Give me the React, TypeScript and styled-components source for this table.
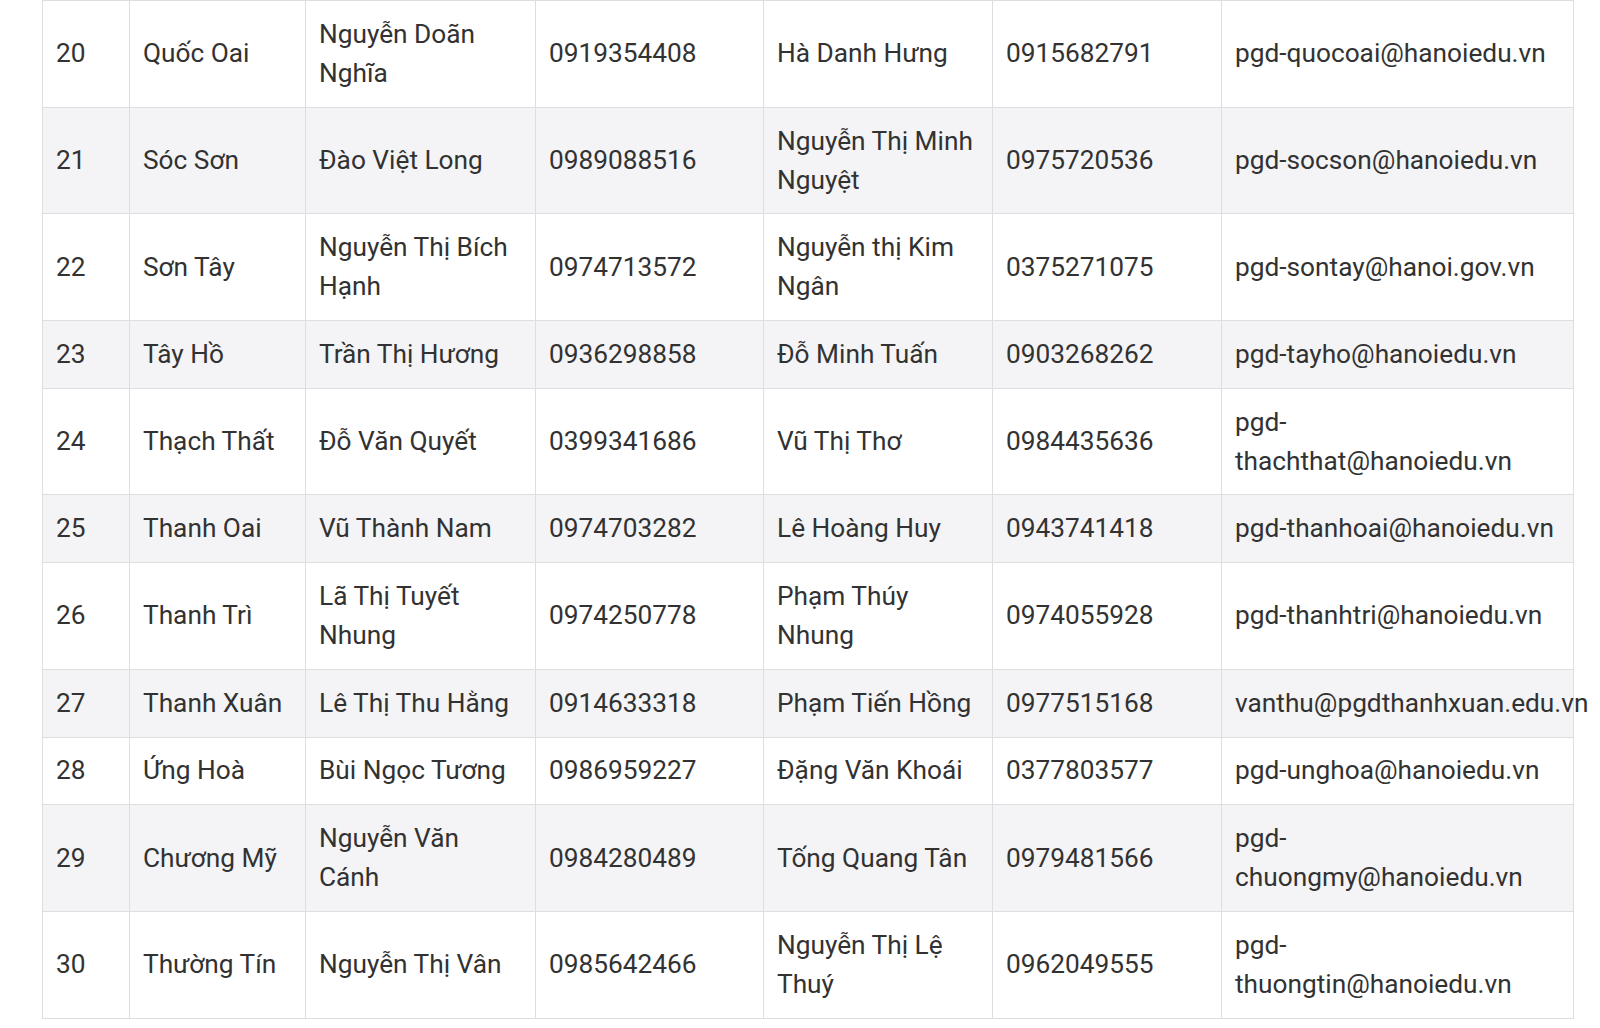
import styled, { createGlobalStyle } from "styled-components";

type Office = {
  no: number;
  district: string;
  head: string;
  headPhone: string;
  contact: string;
  contactPhone: string;
  email: string;
};

const offices: Office[] = [
  { no: 20, district: "Quốc Oai", head: "Nguyễn Doãn Nghĩa", headPhone: "0919354408", contact: "Hà Danh Hưng", contactPhone: "0915682791", email: "pgd-quocoai@hanoiedu.vn" },
  { no: 21, district: "Sóc Sơn", head: "Đào Việt Long", headPhone: "0989088516", contact: "Nguyễn Thị Minh Nguyệt", contactPhone: "0975720536", email: "pgd-socson@hanoiedu.vn" },
  { no: 22, district: "Sơn Tây", head: "Nguyễn Thị Bích Hạnh", headPhone: "0974713572", contact: "Nguyễn thị Kim Ngân", contactPhone: "0375271075", email: "pgd-sontay@hanoi.gov.vn" },
  { no: 23, district: "Tây Hồ", head: "Trần Thị Hương", headPhone: "0936298858", contact: "Đỗ Minh Tuấn", contactPhone: "0903268262", email: "pgd-tayho@hanoiedu.vn" },
  { no: 24, district: "Thạch Thất", head: "Đỗ Văn Quyết", headPhone: "0399341686", contact: "Vũ Thị Thơ", contactPhone: "0984435636", email: "pgd-thachthat@hanoiedu.vn" },
  { no: 25, district: "Thanh Oai", head: "Vũ Thành Nam", headPhone: "0974703282", contact: "Lê Hoàng Huy", contactPhone: "0943741418", email: "pgd-thanhoai@hanoiedu.vn" },
  { no: 26, district: "Thanh Trì", head: "Lã Thị Tuyết Nhung", headPhone: "0974250778", contact: "Phạm Thúy Nhung", contactPhone: "0974055928", email: "pgd-thanhtri@hanoiedu.vn" },
  { no: 27, district: "Thanh Xuân", head: "Lê Thị Thu Hằng", headPhone: "0914633318", contact: "Phạm Tiến Hồng", contactPhone: "0977515168", email: "vanthu@pgdthanhxuan.edu.vn" },
  { no: 28, district: "Ứng Hoà", head: "Bùi Ngọc Tương", headPhone: "0986959227", contact: "Đặng Văn Khoái", contactPhone: "0377803577", email: "pgd-unghoa@hanoiedu.vn" },
  { no: 29, district: "Chương Mỹ", head: "Nguyễn Văn Cánh", headPhone: "0984280489", contact: "Tống Quang Tân", contactPhone: "0979481566", email: "pgd-chuongmy@hanoiedu.vn" },
  { no: 30, district: "Thường Tín", head: "Nguyễn Thị Vân", headPhone: "0985642466", contact: "Nguyễn Thị Lệ Thuý", contactPhone: "0962049555", email: "pgd-thuongtin@hanoiedu.vn" },
];

const columnWidths = [87, 176, 230, 228, 229, 229, 352];

export default function App() {
  return (
    <>
      <GlobalStyle />
      <Page>
        <Table>
          <colgroup>
            {columnWidths.map((w, i) => (
              <Col key={i} $width={w} />
            ))}
          </colgroup>
          <tbody>
            {offices.map((o, i) => (
              <Row key={o.no} $striped={i % 2 === 1}>
                <Cell>{o.no}</Cell>
                <Cell>{o.district}</Cell>
                <Cell>{o.head}</Cell>
                <Cell>{o.headPhone}</Cell>
                <Cell>{o.contact}</Cell>
                <Cell>{o.contactPhone}</Cell>
                <Cell>{o.email}</Cell>
              </Row>
            ))}
          </tbody>
        </Table>
      </Page>
    </>
  );
}

const GlobalStyle = createGlobalStyle`
  html, body {
    margin: 0;
    background: #ffffff;
  }

  body {
    font-family: Roboto, "Noto Sans", "Liberation Sans", sans-serif;
    color: #323232;
    overflow: hidden;
  }
`;

const Page = styled.main`
  width: 1600px;
  height: 1028px;
  padding-left: 42px;
  box-sizing: border-box;
  overflow: hidden;
`;

const Table = styled.table`
  width: 1532px;
  table-layout: fixed;
  border-collapse: collapse;
  font-size: 26.25px;
  line-height: 39px;
`;

const Col = styled.col<{ $width: number }>`
  width: ${(p) => p.$width}px;
`;

const Row = styled.tr<{ $striped: boolean }>`
  background-color: ${(p) => (p.$striped ? "#f4f4f6" : "#ffffff")};
`;

const Cell = styled.td`
  padding: 13.85px 13px;
  border: 1px solid #dedee0;
  vertical-align: middle;
  text-align: left;
`;
